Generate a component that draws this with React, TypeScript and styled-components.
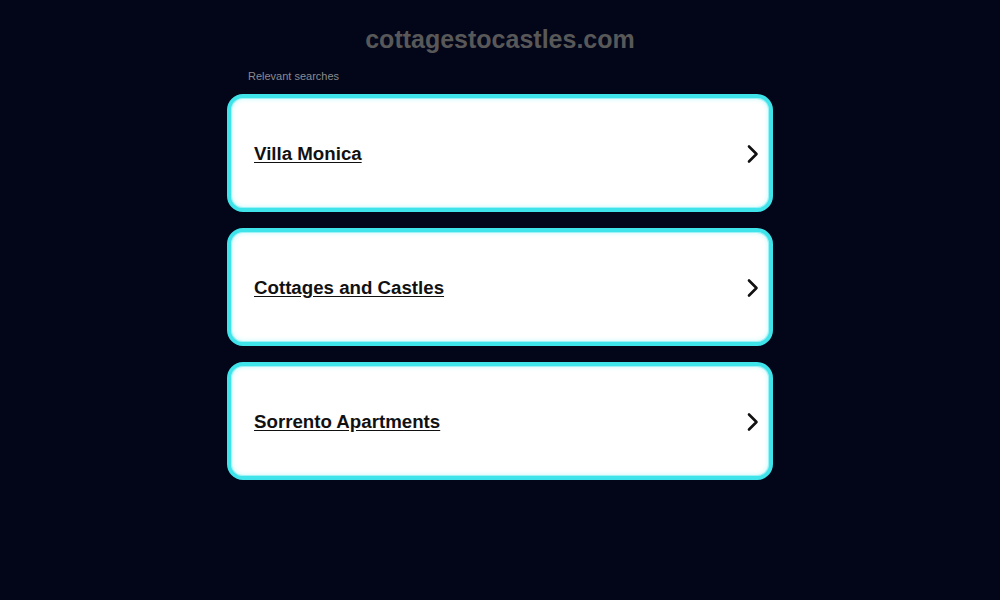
import React from 'react';
import styled, { createGlobalStyle } from 'styled-components';

const GlobalStyle = createGlobalStyle`
  html, body {
    margin: 0;
    padding: 0;
    background-color: #030619;
    font-family: 'Liberation Sans', Arial, sans-serif;
  }
`;

const searches = ['Villa Monica', 'Cottages and Castles', 'Sorrento Apartments'];

const ChevronIcon = () => (
  <svg width="14" height="20" viewBox="0 0 14 20" fill="none">
    <path
      d="M3 2.5 L10.5 10 L3 17.5"
      stroke="#111"
      strokeWidth="2.6"
      strokeLinecap="round"
      strokeLinejoin="round"
    />
  </svg>
);

const App = () => {
  return (
    <>
      <GlobalStyle />
      <Page>
        <DomainTitle>cottagestocastles.com</DomainTitle>
        <Content>
          <SectionLabel>Relevant searches</SectionLabel>
          <CardList>
            {searches.map((label) => (
              <Card key={label}>
                <CardLink href="#">{label}</CardLink>
                <ChevronIcon />
              </Card>
            ))}
          </CardList>
        </Content>
      </Page>
    </>
  );
};

export default App;

const Page = styled.div`
  display: flex;
  flex-direction: column;
  align-items: center;
  width: 100%;
  min-height: 600px;
  padding-top: 24px;
  box-sizing: border-box;
`;

const DomainTitle = styled.h1`
  margin: 0;
  font-size: 25px;
  line-height: 30px;
  font-weight: 700;
  color: #585858;
`;

const Content = styled.div`
  display: flex;
  flex-direction: column;
  width: 546px;
  margin-top: 16px;
`;

const SectionLabel = styled.div`
  padding-left: 21px;
  font-size: 11px;
  line-height: 13px;
  color: #8a8a8f;
`;

const CardList = styled.div`
  display: flex;
  flex-direction: column;
  gap: 16px;
  margin-top: 11px;
`;

const Card = styled.div`
  display: flex;
  justify-content: space-between;
  align-items: center;
  height: 118px;
  padding: 1px 9px 0 23px;
  box-sizing: border-box;
  background-color: #fff;
  border: 4px solid #3fe3ea;
  border-radius: 16px;
  box-shadow: inset 0 0 0 1px #9ff3f6, inset 0 0 5px 1px #c8f8fa;
`;

const CardLink = styled.a`
  font-size: 18.7px;
  font-weight: 700;
  color: #111;
  text-decoration: underline;
  text-underline-offset: 2px;
`;
